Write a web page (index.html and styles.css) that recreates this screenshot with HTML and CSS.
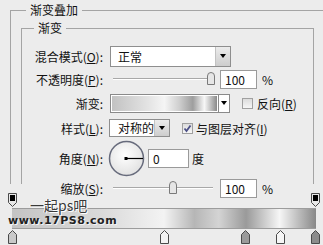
FILE: index.html
```html
<!DOCTYPE html>
<html lang="zh-CN">
    <head>
        <meta charset="UTF-8">
        <title>渐变叠加</title>
        <link rel="stylesheet" href="styles.css">
    </head>
    <body>
        <div class="dialog">
            <fieldset class="group outer">
                <legend>渐变叠加</legend>
                <fieldset class="group inner">
                    <legend>渐变</legend>

                    <div class="row r1">
                        <span class="label">混合模式(<u>O</u>):</span>
                        <div class="select blend">
                            <span class="value">正常</span>
                            <span class="arrow"></span>
                        </div>
                    </div>

                    <div class="row r2">
                        <span class="label">不透明度(<u>P</u>):</span>
                        <div class="slider">
                            <svg class="thumb" style="left: 98%" width="8" height="13" viewBox="0 0 8 13"><path d="M0.5 4 Q0.5 0.5 4 0.5 Q7.5 0.5 7.5 4 L7.5 12.5 L0.5 12.5 Z" fill="#e6e6e6" stroke="#7a7a7a"/></svg>
                        </div>
                        <span class="field">100</span>
                        <span class="unit">%</span>
                    </div>

                    <div class="row r3">
                        <span class="label">渐变:</span>
                        <div class="grad-pick">
                            <span class="grad"></span>
                            <span class="arrow"></span>
                        </div>
                        <span class="check"></span>
                        <span class="check-text">反向(<u>R</u>)</span>
                    </div>

                    <div class="row r4">
                        <span class="label">样式(<u>L</u>):</span>
                        <div class="select style">
                            <span class="value">对称的</span>
                            <span class="arrow"></span>
                        </div>
                        <span class="check on">
                            <svg width="9" height="9" viewBox="0 0 9 9"><path d="M1.5 4.5 L3.5 7 L7.5 1.5" fill="none" stroke="#4b4f86" stroke-width="1.8"/></svg>
                        </span>
                        <span class="check-text">与图层对齐(<u>I</u>)</span>
                    </div>

                    <div class="row r5">
                        <span class="label">角度(<u>N</u>):</span>
                        <svg class="dial" width="37" height="37" viewBox="0 0 37 37">
                            <defs>
                                <radialGradient id="dialFill" cx="45%" cy="40%" r="60%">
                                    <stop offset="0" stop-color="#ffffff"/>
                                    <stop offset="1" stop-color="#e2e2e2"/>
                                </radialGradient>
                            </defs>
                            <circle cx="18.5" cy="18.5" r="17" fill="url(#dialFill)" stroke="#676b7c" stroke-width="1.5"/>
                            <line x1="18.5" y1="18.5" x2="35" y2="18.5" stroke="#000" stroke-width="1.2"/>
                            <rect x="16.5" y="17" width="3" height="3" fill="#000"/>
                        </svg>
                        <span class="field angle">0</span>
                        <span class="unit deg">度</span>
                    </div>

                    <div class="row r6">
                        <span class="label">缩放(<u>S</u>):</span>
                        <div class="slider">
                            <svg class="thumb" style="left: 60%" width="8" height="13" viewBox="0 0 8 13"><path d="M0.5 4 Q0.5 0.5 4 0.5 Q7.5 0.5 7.5 4 L7.5 12.5 L0.5 12.5 Z" fill="#e6e6e6" stroke="#7a7a7a"/></svg>
                        </div>
                        <span class="field">100</span>
                        <span class="unit">%</span>
                    </div>
                </fieldset>
            </fieldset>
        </div>

        <div class="editor">
            <div class="stops top">
                <svg class="stop" style="left: 0%" width="9" height="14" viewBox="0 0 9 14"><path d="M0.5 0.5 H8.5 V9.5 L4.5 13.5 L0.5 9.5 Z" fill="#e8e8e8" stroke="#4a4a4a"/><rect x="2" y="2" width="5" height="6" fill="#000"/></svg>
                <svg class="stop" style="left: 100%" width="9" height="14" viewBox="0 0 9 14"><path d="M0.5 0.5 H8.5 V9.5 L4.5 13.5 L0.5 9.5 Z" fill="#e8e8e8" stroke="#4a4a4a"/><rect x="2" y="2" width="5" height="6" fill="#000"/></svg>
            </div>
            <div class="bar"></div>
            <div class="stops bottom">
                <svg class="stop" style="left: 0%" width="9" height="14" viewBox="0 0 9 14"><path d="M4.5 0.5 L8.5 4.5 V13.5 H0.5 V4.5 Z" fill="#c9c9c9" stroke="#4a4a4a"/></svg>
                <svg class="stop" style="left: 50%" width="9" height="14" viewBox="0 0 9 14"><path d="M4.5 0.5 L8.5 4.5 V13.5 H0.5 V4.5 Z" fill="#f3f3f3" stroke="#4a4a4a"/></svg>
                <svg class="stop" style="left: 77%" width="9" height="14" viewBox="0 0 9 14"><path d="M4.5 0.5 L8.5 4.5 V13.5 H0.5 V4.5 Z" fill="#9a9a9a" stroke="#4a4a4a"/></svg>
                <svg class="stop" style="left: 88.5%" width="9" height="14" viewBox="0 0 9 14"><path d="M4.5 0.5 L8.5 4.5 V13.5 H0.5 V4.5 Z" fill="#f6f6f6" stroke="#4a4a4a"/></svg>
                <svg class="stop" style="left: 100%" width="9" height="14" viewBox="0 0 9 14"><path d="M4.5 0.5 L8.5 4.5 V13.5 H0.5 V4.5 Z" fill="#8c8c8c" stroke="#4a4a4a"/></svg>
            </div>

            <!-- marca d'agua por cima da barra -->
            <div class="mark-cn">一起ps吧</div>
            <div class="mark-url">www.17PS8.com</div>
        </div>
    </body>
</html>
```

FILE: styles.css
```css
body {
    margin: 0;
    padding: 0;
    width: 323px;
    height: 245px;
    overflow: hidden;
    background-color: #ececec;
    font-family: "Noto Sans CJK SC", "Liberation Sans", sans-serif;
    font-size: 12px;
    color: #111;
}

.dialog {
    height: 184px;
}

.group {
    margin: 0;
    padding: 0;
    min-width: 0;
    box-sizing: border-box;
    border: 1px solid #a4a4a4;
    border-bottom: none;
}

.group > legend {
    padding: 0 4px;
    line-height: 14px;
    font-size: 12px;
}

.outer {
    width: 320px;
    height: 181px;
    margin: 3px 0 0 10px;
    border-right: none;
}

.outer > legend {
    margin-left: 15px;
}

.inner {
    width: 293px;
    height: 163px;
    margin: 4px 0 0 10px;
    padding-top: 10px;
}

.inner > legend {
    margin-left: 12px;
}

.row {
    display: flex;
    align-items: center;
    height: 24px;
    white-space: nowrap;
}

.r1 { height: 22px; }
.r4 { height: 26px; }
.r5 { height: 35px; }

.label {
    width: 81px;
    margin-right: 7px;
    text-align: right;
}

.select {
    display: flex;
    box-sizing: border-box;
    height: 21px;
    border: 1px solid #8e8e8e;
    background-color: white;
}

.select .value {
    flex: 1;
    padding-left: 7px;
    line-height: 19px;
}

.blend {
    width: 121px;
}

.style {
    width: 61px;
    height: 18px;
    margin-left: -1px;
}

.style .value {
    line-height: 16px;
    padding-left: 8px;
}

.arrow {
    display: flex;
    align-items: center;
    justify-content: center;
    width: 14px;
    background: linear-gradient(#ececec, #cdcdcd);
    border-left: 1px solid #c2c2c2;
}

.arrow::before {
    content: "";
    border-left: 3px solid transparent;
    border-right: 3px solid transparent;
    border-top: 4px solid black;
}

.slider {
    position: relative;
    width: 100px;
    height: 14px;
    margin-left: 3px;
    margin-right: 7px;
}

.slider::before {
    content: "";
    position: absolute;
    left: 0;
    right: 0;
    top: 6px;
    height: 1px;
    background-color: #a8a8a8;
    border-bottom: 1px solid white;
}

.thumb {
    position: absolute;
    top: 0;
    margin-left: -4px;
}

.field {
    box-sizing: border-box;
    width: 37px;
    height: 19px;
    padding-left: 4px;
    line-height: 17px;
    border: 1px solid #9a9a9a;
    background-color: white;
}

.unit {
    margin-left: 5px;
}

.grad-pick {
    display: flex;
    box-sizing: border-box;
    width: 120px;
    height: 19px;
    border: 1px solid #8a8a8a;
    background-color: white;
}

.grad {
    flex: 1;
    margin: 1px;
    background: linear-gradient(to right, #c2c2c2 0%, #e4e4e4 35%, #f5f5f5 50%, #cfcfcf 64%, #9e9e9e 77%, #f7f7f7 88%, #8a8a8a 100%);
}

.grad-pick .arrow {
    width: 10px;
    background: white;
    border-left: 1px solid #8a8a8a;
}

.check {
    box-sizing: border-box;
    width: 11px;
    height: 11px;
    margin-left: 12px;
    margin-right: 4px;
    border: 1px solid #a0a0a0;
    background: linear-gradient(#dcdcdc, #f6f6f6);
}

.check.on {
    display: flex;
    align-items: center;
    justify-content: center;
    margin-left: 12px;
    margin-right: 3px;
}

.dial {
    margin-left: -2px;
}

.angle {
    width: 41px;
    margin-left: 3px;
}

.deg {
    margin-left: 3px;
}

/* editor de gradiente */
.editor {
    position: relative;
    margin-top: 6px;
}

.stops {
    position: relative;
    width: 303px;
    height: 14px;
    margin-left: 12px;
}

.stop {
    position: absolute;
    top: 0;
    margin-left: -4px;
}

.bar {
    box-sizing: border-box;
    width: 304px;
    height: 21px;
    margin: 1px 0 1px 12px;
    border-top: 1px solid #9c9c9c;
    border-bottom: 1px solid #9c9c9c;
    background: linear-gradient(to right, #c4c4c4 0%, #dadada 30%, #f3f3f3 50%, #b6b6b6 60%, #d4d4d4 68%, #9a9a9a 77%, #f6f6f6 88%, #888888 100%);
}

.mark-cn {
    position: absolute;
    left: 30px;
    top: 4px;
    font-size: 14px;
    line-height: 16px;
    color: #3a3a3a;
    text-shadow: 1px 1px 0 white, -1px 0 0 white;
}

.mark-url {
    position: absolute;
    left: 8px;
    top: 22px;
    font-family: "DejaVu Sans", sans-serif;
    font-weight: bold;
    font-size: 11px;
    line-height: 12px;
    letter-spacing: 0.5px;
    color: #222;
    text-shadow: 1px 1px 0 #f4f4f4;
}
```
